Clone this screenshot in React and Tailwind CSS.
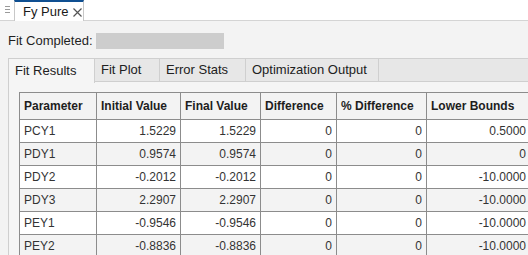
const ROWS = [
  ['PCY1', '1.5229', '1.5229', '0', '0', '0.5000'],
  ['PDY1', '0.9574', '0.9574', '0', '0', '0'],
  ['PDY2', '-0.2012', '-0.2012', '0', '0', '-10.0000'],
  ['PDY3', '2.2907', '2.2907', '0', '0', '-10.0000'],
  ['PEY1', '-0.9546', '-0.9546', '0', '0', '-10.0000'],
  ['PEY2', '-0.8836', '-0.8836', '0', '0', '-10.0000'],
];

const HEADERS = ['Parameter', 'Initial Value', 'Final Value', 'Difference', '% Difference', 'Lower Bounds'];
const WIDTHS = ['w-[77px]', 'w-[84px]', 'w-[80px]', 'w-[76px]', 'w-[90px]', 'w-[104px]'];
const TABS = [
  ['Fit Results', 'w-[86px]'],
  ['Fit Plot', 'w-[65px]'],
  ['Error Stats', 'w-[86px]'],
  ['Optimization Output', 'w-[133px]'],
];

export default function App() {
  return (
    <div className="w-[528px] h-[255px] overflow-hidden bg-[#f3f3f3] font-['Liberation_Sans',Arial,sans-serif] text-[#212121]">
      {/* document tab strip */}
      <div className="h-[21px] bg-white border-b border-[#d4d4d4] flex">
        <div className="w-[14px] flex flex-col items-center pt-[6px] gap-[2px] pl-[1px]">
          <span className="block w-[5px] h-px bg-[#9a9a9a]" />
          <span className="block w-[5px] h-px bg-[#9a9a9a]" />
          <span className="block w-[5px] h-px bg-[#9a9a9a]" />
        </div>
        <div className="w-[70px] h-[21px] bg-white border-t-2 border-t-[#0f4f91] border-x border-x-[#c8c8c8] flex items-center pl-[8px] text-[13px] text-[#1a1a1a]">
          Fy Pure
          <svg width="9" height="9" viewBox="0 0 9 9" className="ml-[4px] mt-px">
            <path d="M0.5 0.5 L8.5 8.5 M8.5 0.5 L0.5 8.5" stroke="#555" strokeWidth="1.2" fill="none" />
          </svg>
        </div>
      </div>

      <div className="flex items-center h-[22px] mt-[9px] pl-[8px] text-[13px] text-[#1f1f1f]">
        <span className="w-[88px]">Fit Completed:</span>
        <span className="block w-[128px] h-[16px] bg-[#cdcdcd]" />
      </div>

      {/* tab group */}
      <div className="ml-[8px] mt-[6px] border-l border-[#cfcfcf]">
        <div className="flex h-[24px] bg-[#e7e7e7] border-y border-[#cfcfcf] text-[13px]">
          {TABS.map(([label, w], i) => (
            <div
              key={label}
              className={`${w} flex items-center pl-[6px] border-r border-[#cfcfcf] ${
                i === 0 ? 'bg-[#f5f5f5] h-[24px] -mb-px' : ''
              }`}
            >
              {label}
            </div>
          ))}
        </div>
        <div className="bg-[#f5f5f5] pl-[10px] pt-[10px] h-[200px]">
          <div className="border-l border-t border-[#8c8c8c] w-[520px]">
            <div className="flex h-[27px] bg-[#f3f3f3] border-b border-[#8c8c8c]">
              {HEADERS.map((h, i) => (
                <div
                  key={h}
                  className={`${WIDTHS[i]} shrink-0 border-r border-[#8c8c8c] flex items-center pl-[4px] font-bold text-[12px] text-[#1e1e1e]`}
                >
                  {h}
                </div>
              ))}
            </div>
            {ROWS.map((row, r) => (
              <div
                key={row[0]}
                className={`flex h-[23px] border-b border-[#8c8c8c] ${r % 2 ? 'bg-[#f3f3f3]' : 'bg-white'}`}
              >
                {row.map((cell, i) => (
                  <div
                    key={i}
                    className={`${WIDTHS[i]} shrink-0 border-r border-[#8c8c8c] flex items-center text-[12px] text-[#333] ${
                      i === 0 ? 'pl-[4px]' : 'justify-end pr-[4px]'
                    }`}
                  >
                    {cell}
                  </div>
                ))}
              </div>
            ))}
          </div>
        </div>
      </div>
    </div>
  );
}
